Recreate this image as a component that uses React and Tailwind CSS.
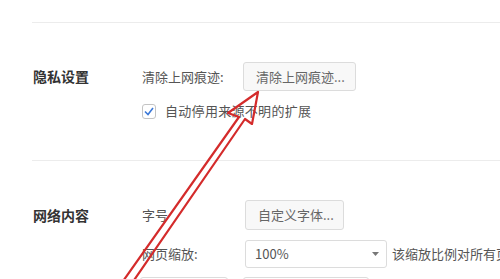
import React from "react";

const font = { fontFamily: '"Noto Sans CJK SC", "Noto Sans", sans-serif' };

export default function App() {
  return (
    <div
      className="relative w-[500px] h-[279px] overflow-hidden bg-white text-[13px] text-[#555]"
      style={font}
    >
      <div className="h-[22px]" />
      {/* Section 1 */}
      <div className="ml-[32px] border-t border-[#ececec] pt-[39px] pb-[41px] flex">
        <div className="w-[110px] shrink-0 pl-[1px] h-[29px] flex items-center text-[14px] font-bold text-[#333]">
          隐私设置
        </div>
        <div className="flex flex-col gap-[12px]">
          <div className="flex items-center h-[29px]">
            <div className="w-[101px] shrink-0">清除上网痕迹:</div>
            <div className="h-[29px] w-[113px] shrink-0 border border-[#dcdcdc] rounded-[3px] bg-[#f8f8f8] flex items-center pl-[12px] text-[#666]">
              清除上网痕迹...
            </div>
          </div>
          <div className="flex items-center h-[16px]">
            <div className="w-[14px] h-[15px] shrink-0 border border-[#c4c4c4] rounded-[3px] bg-white flex items-center justify-center mr-[9px]">
              <svg width="10" height="9" viewBox="0 0 10 9">
                <path d="M1 4.5 L4 7.5 L9 1" fill="none" stroke="#3b78d8" strokeWidth="1.6" />
              </svg>
            </div>
            <div className="tracking-[0.3px] whitespace-nowrap">自动停用来源不明的扩展</div>
          </div>
        </div>
      </div>
      {/* Section 2 */}
      <div className="ml-[32px] border-t border-[#ececec] pt-[39px] flex">
        <div className="w-[110px] shrink-0 pl-[1px] h-[30px] flex items-center text-[14px] font-bold text-[#333]">
          网络内容
        </div>
        <div className="flex flex-col">
          <div className="flex items-center h-[30px]">
            <div className="w-[103px] shrink-0">字号</div>
            <div className="h-[30px] w-[99px] shrink-0 border border-[#dcdcdc] rounded-[3px] bg-[#f8f8f8] flex items-center pl-[12px] text-[#666]">
              自定义字体...
            </div>
          </div>
          <div className="flex items-center h-[28px] mt-[10px]">
            <div className="w-[103px] shrink-0">网页缩放:</div>
            <div className="h-[28px] w-[142px] shrink-0 border border-[#dcdcdc] rounded-[3px] bg-white flex items-center pl-[9px] pr-[7px] justify-between text-[#555]">
              <span>100%</span>
              <svg width="7" height="4" viewBox="0 0 7 4">
                <path d="M0 0 L7 0 L3.5 4 Z" fill="#777" />
              </svg>
            </div>
            <div className="ml-[5px] whitespace-nowrap">该缩放比例对所有页面</div>
          </div>
          <div className="flex mt-[9px] -ml-[2px]">
            <div className="w-[88px] h-[20px] shrink-0 border border-[#dcdcdc] rounded-[3px]" />
            <div className="ml-[15px] w-[126px] h-[20px] shrink-0 border border-[#dcdcdc] rounded-[3px]" />
          </div>
        </div>
      </div>
      {/* Red arrow annotation */}
      <svg
        className="absolute left-0 top-0 pointer-events-none"
        width="500"
        height="279"
        viewBox="0 0 500 279"
      >
        <path
          d="M121 284 L239 117 L228 113 L258 92 L252 124 L245 119 L130 286"
          fill="none"
          stroke="#d42b2b"
          strokeWidth="2.2"
          strokeLinejoin="round"
        />
      </svg>
    </div>
  );
}
